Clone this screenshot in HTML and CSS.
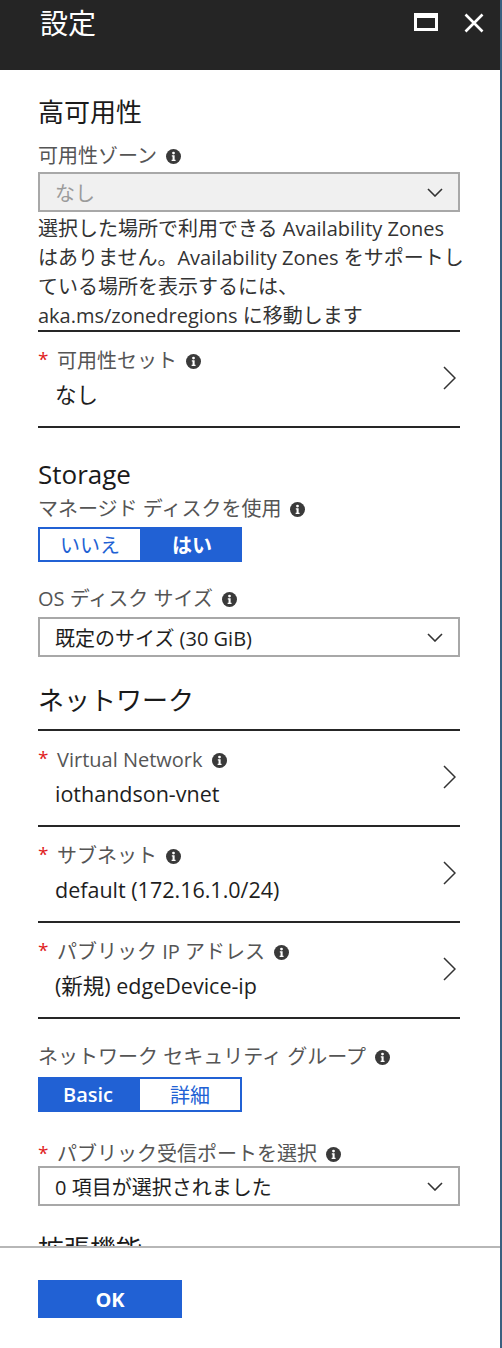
FILE: index.html
```html
<!DOCTYPE html>
<html lang="ja">
<head>
<meta charset="utf-8">
<title>設定</title>
<link rel="stylesheet" href="styles.css">
</head>
<body>
<div class="blade">
  <header class="blade-header">
    <h1 class="blade-title">設定</h1>
    <div class="header-actions">
      <span class="hdr-btn">
        <svg width="24" height="18" viewBox="0 0 24 18"><path d="M0 0H24V18H0Z M3 5V15H21V5Z" fill="#fff" fill-rule="evenodd"/></svg>
      </span>
      <span class="hdr-btn">
        <svg width="20" height="20" viewBox="0 0 20 20"><path d="M1.5 1.5L18.5 18.5M18.5 1.5L1.5 18.5" stroke="#fff" stroke-width="2.6" fill="none"/></svg>
      </span>
    </div>
  </header>

  <main class="blade-content">
    <h2 class="section-title">高可用性</h2>

    <div class="field field-zone">
      <div class="label">可用性ゾーン<svg class="info" width="15" height="15" viewBox="0 0 16 16"><circle cx="8" cy="8" r="8" fill="#3a3a3a"/><circle cx="8" cy="4.3" r="1.5" fill="#fff"/><path d="M6.2 6.6H9.2V11.4H10.2V12.8H6V11.4H7V8H6.2Z" fill="#fff"/></svg></div>
      <div class="select disabled select-zone">
        <span>なし</span>
        <svg class="chev-down" width="16" height="9" viewBox="0 0 16 9"><path d="M1 1L8 8L15 1" stroke="#333" stroke-width="1.6" fill="none"/></svg>
      </div>
      <p class="help">選択した場所で利用できる Availability Zones<br>はありません。Availability Zones をサポートし<br>ている場所を表示するには、<br>aka.ms/zonedregions に移動します</p>
    </div>

    <div class="nav-row">
      <div class="nav-text">
        <div class="label"><span class="req">*</span>可用性セット<svg class="info" width="15" height="15" viewBox="0 0 16 16"><circle cx="8" cy="8" r="8" fill="#3a3a3a"/><circle cx="8" cy="4.3" r="1.5" fill="#fff"/><path d="M6.2 6.6H9.2V11.4H10.2V12.8H6V11.4H7V8H6.2Z" fill="#fff"/></svg></div>
        <div class="value">なし</div>
      </div>
      <svg class="chev-right" width="13" height="24" viewBox="0 0 13 24"><path d="M1 1L12 12L1 23" stroke="#333" stroke-width="1.5" fill="none"/></svg>
    </div>

    <h2 class="section-title st-storage">Storage</h2>

    <div class="field field-managed">
      <div class="label">マネージド ディスクを使用<svg class="info" width="15" height="15" viewBox="0 0 16 16"><circle cx="8" cy="8" r="8" fill="#3a3a3a"/><circle cx="8" cy="4.3" r="1.5" fill="#fff"/><path d="M6.2 6.6H9.2V11.4H10.2V12.8H6V11.4H7V8H6.2Z" fill="#fff"/></svg></div>
      <div class="toggle toggle-managed">
        <span class="opt off">いいえ</span>
        <span class="opt on">はい</span>
      </div>
    </div>

    <div class="field field-os">
      <div class="label">OS ディスク サイズ<svg class="info" width="15" height="15" viewBox="0 0 16 16"><circle cx="8" cy="8" r="8" fill="#3a3a3a"/><circle cx="8" cy="4.3" r="1.5" fill="#fff"/><path d="M6.2 6.6H9.2V11.4H10.2V12.8H6V11.4H7V8H6.2Z" fill="#fff"/></svg></div>
      <div class="select select-os">
        <span>既定のサイズ (30 GiB)</span>
        <svg class="chev-down" width="16" height="9" viewBox="0 0 16 9"><path d="M1 1L8 8L15 1" stroke="#333" stroke-width="1.6" fill="none"/></svg>
      </div>
    </div>

    <h2 class="section-title st-network">ネットワーク</h2>

    <div class="nav-row">
      <div class="nav-text">
        <div class="label"><span class="req">*</span>Virtual Network<svg class="info" width="15" height="15" viewBox="0 0 16 16"><circle cx="8" cy="8" r="8" fill="#3a3a3a"/><circle cx="8" cy="4.3" r="1.5" fill="#fff"/><path d="M6.2 6.6H9.2V11.4H10.2V12.8H6V11.4H7V8H6.2Z" fill="#fff"/></svg></div>
        <div class="value">iothandson-vnet</div>
      </div>
      <svg class="chev-right" width="13" height="24" viewBox="0 0 13 24"><path d="M1 1L12 12L1 23" stroke="#333" stroke-width="1.5" fill="none"/></svg>
    </div>

    <div class="nav-row">
      <div class="nav-text">
        <div class="label"><span class="req">*</span>サブネット<svg class="info" width="15" height="15" viewBox="0 0 16 16"><circle cx="8" cy="8" r="8" fill="#3a3a3a"/><circle cx="8" cy="4.3" r="1.5" fill="#fff"/><path d="M6.2 6.6H9.2V11.4H10.2V12.8H6V11.4H7V8H6.2Z" fill="#fff"/></svg></div>
        <div class="value">default (172.16.1.0/24)</div>
      </div>
      <svg class="chev-right" width="13" height="24" viewBox="0 0 13 24"><path d="M1 1L12 12L1 23" stroke="#333" stroke-width="1.5" fill="none"/></svg>
    </div>

    <div class="nav-row">
      <div class="nav-text">
        <div class="label"><span class="req">*</span>パブリック IP アドレス<svg class="info" width="15" height="15" viewBox="0 0 16 16"><circle cx="8" cy="8" r="8" fill="#3a3a3a"/><circle cx="8" cy="4.3" r="1.5" fill="#fff"/><path d="M6.2 6.6H9.2V11.4H10.2V12.8H6V11.4H7V8H6.2Z" fill="#fff"/></svg></div>
        <div class="value">(新規) edgeDevice-ip</div>
      </div>
      <svg class="chev-right" width="13" height="24" viewBox="0 0 13 24"><path d="M1 1L12 12L1 23" stroke="#333" stroke-width="1.5" fill="none"/></svg>
    </div>

    <div class="field field-nsg">
      <div class="label">ネットワーク セキュリティ グループ<svg class="info" width="15" height="15" viewBox="0 0 16 16"><circle cx="8" cy="8" r="8" fill="#3a3a3a"/><circle cx="8" cy="4.3" r="1.5" fill="#fff"/><path d="M6.2 6.6H9.2V11.4H10.2V12.8H6V11.4H7V8H6.2Z" fill="#fff"/></svg></div>
      <div class="toggle toggle-nsg">
        <span class="opt on">Basic</span>
        <span class="opt off">詳細</span>
      </div>
    </div>

    <div class="field field-ports">
      <div class="label"><span class="req">*</span>パブリック受信ポートを選択<svg class="info" width="15" height="15" viewBox="0 0 16 16"><circle cx="8" cy="8" r="8" fill="#3a3a3a"/><circle cx="8" cy="4.3" r="1.5" fill="#fff"/><path d="M6.2 6.6H9.2V11.4H10.2V12.8H6V11.4H7V8H6.2Z" fill="#fff"/></svg></div>
      <div class="select">
        <span>0 項目が選択されました</span>
        <svg class="chev-down" width="16" height="9" viewBox="0 0 16 9"><path d="M1 1L8 8L15 1" stroke="#333" stroke-width="1.6" fill="none"/></svg>
      </div>
    </div>

    <h2 class="section-title st-ext">拡張機能</h2>
  </main>

  <footer class="blade-footer">
    <button class="ok-btn" type="button">OK</button>
  </footer>
</div>
</body>
</html>
```

FILE: styles.css
```css
html, body {
  margin: 0;
  padding: 0;
  background: #ffffff;
}

body {
  font-family: "Open Sans", "Noto Sans CJK JP", sans-serif;
  color: #1e1e1e;
}

.blade {
  width: 500px;
  height: 1348px;
  border-right: 2px solid #3a6080;
  display: flex;
  flex-direction: column;
}

/* header */
.blade-header {
  flex: none;
  height: 70px;
  box-sizing: border-box;
  background: #252525;
  color: #ffffff;
  display: flex;
  justify-content: space-between;
  align-items: flex-start;
  padding: 0 16px 0 40px;
}

.blade-title {
  margin: 0;
  padding-top: 5px;
  font-size: 28px;
  line-height: 36px;
  font-weight: 400;
}

.header-actions {
  display: flex;
  align-items: flex-start;
  gap: 26px;
  padding-top: 13px;
}

.hdr-btn {
  display: block;
  line-height: 0;
}

/* content */
.blade-content {
  flex: 1;
  min-height: 0;
  overflow: hidden;
  padding: 25px 40px 0 38px;
}

.section-title {
  margin: 0;
  font-size: 26px;
  line-height: 34px;
  font-weight: 400;
  color: #1a1a1a;
}

.st-storage { margin-top: 29px; }

.st-network {
  margin-top: 26px;
  padding-bottom: 12px;
  border-bottom: 2px solid #262626;
}

.st-ext { margin-top: 26px; }

.label {
  display: flex;
  align-items: center;
  font-size: 20px;
  line-height: 24px;
  color: #555555;
  white-space: nowrap;
}

.info {
  flex: none;
  margin-left: 9px;
}

.req {
  color: #e0201b;
  font-size: 19px;
  width: 19px;
  flex: none;
  align-self: flex-start;
  line-height: 22px;
}

.field-zone { margin-top: 15px; }
.field-managed { margin-top: 6px; }
.field-os { margin-top: 25px; }
.field-nsg { margin-top: 26px; }
.field-ports { margin-top: 30px; }

.select {
  height: 40px;
  box-sizing: border-box;
  border: 2px solid #a8a8a8;
  background: #ffffff;
  display: flex;
  align-items: center;
  justify-content: space-between;
  padding: 0 15px;
  font-size: 20px;
  color: #1e1e1e;
}

.select-zone { margin-top: 4px; }
.select-os { margin-top: 6px; }

.select.disabled {
  background: #f0f0f0;
  color: #9b9b9b;
}

.help {
  margin: 2px 0 0;
  font-size: 20px;
  line-height: 29px;
  color: #333333;
  white-space: nowrap;
  border-bottom: 2px solid #262626;
}

/* navigation rows */
.nav-row {
  display: flex;
  align-items: center;
  justify-content: space-between;
  padding: 14px 4px 16px 0;
  border-bottom: 2px solid #262626;
}

.nav-row .label { line-height: 30px; }
.nav-row .req { line-height: 26px; }

.value {
  margin-top: 4px;
  padding-left: 17px;
  font-size: 21.5px;
  line-height: 30px;
  color: #1e1e1e;
}

.chev-right { flex: none; }

/* toggles */
.toggle {
  display: flex;
  width: 204px;
  height: 35px;
}

.toggle-managed { margin-top: 6px; }
.toggle-nsg { margin-top: 8px; }

.opt {
  flex: 1;
  box-sizing: border-box;
  display: flex;
  align-items: center;
  justify-content: center;
  font-size: 20px;
}

.opt.off {
  background: #ffffff;
  color: #2161d4;
  border: 2px solid #2161d4;
}

.opt.on {
  background: #2161d4;
  color: #ffffff;
  font-weight: 600;
}

/* footer */
.blade-footer {
  flex: none;
  height: 102px;
  box-sizing: border-box;
  border-top: 2px solid #b7b7b7;
  padding: 32px 0 0 38px;
}

.ok-btn {
  width: 144px;
  height: 38px;
  border: none;
  background: #2161d4;
  color: #ffffff;
  font-family: "Open Sans", "Noto Sans CJK JP", sans-serif;
  font-size: 20px;
  font-weight: 700;
  padding: 0;
}
```
